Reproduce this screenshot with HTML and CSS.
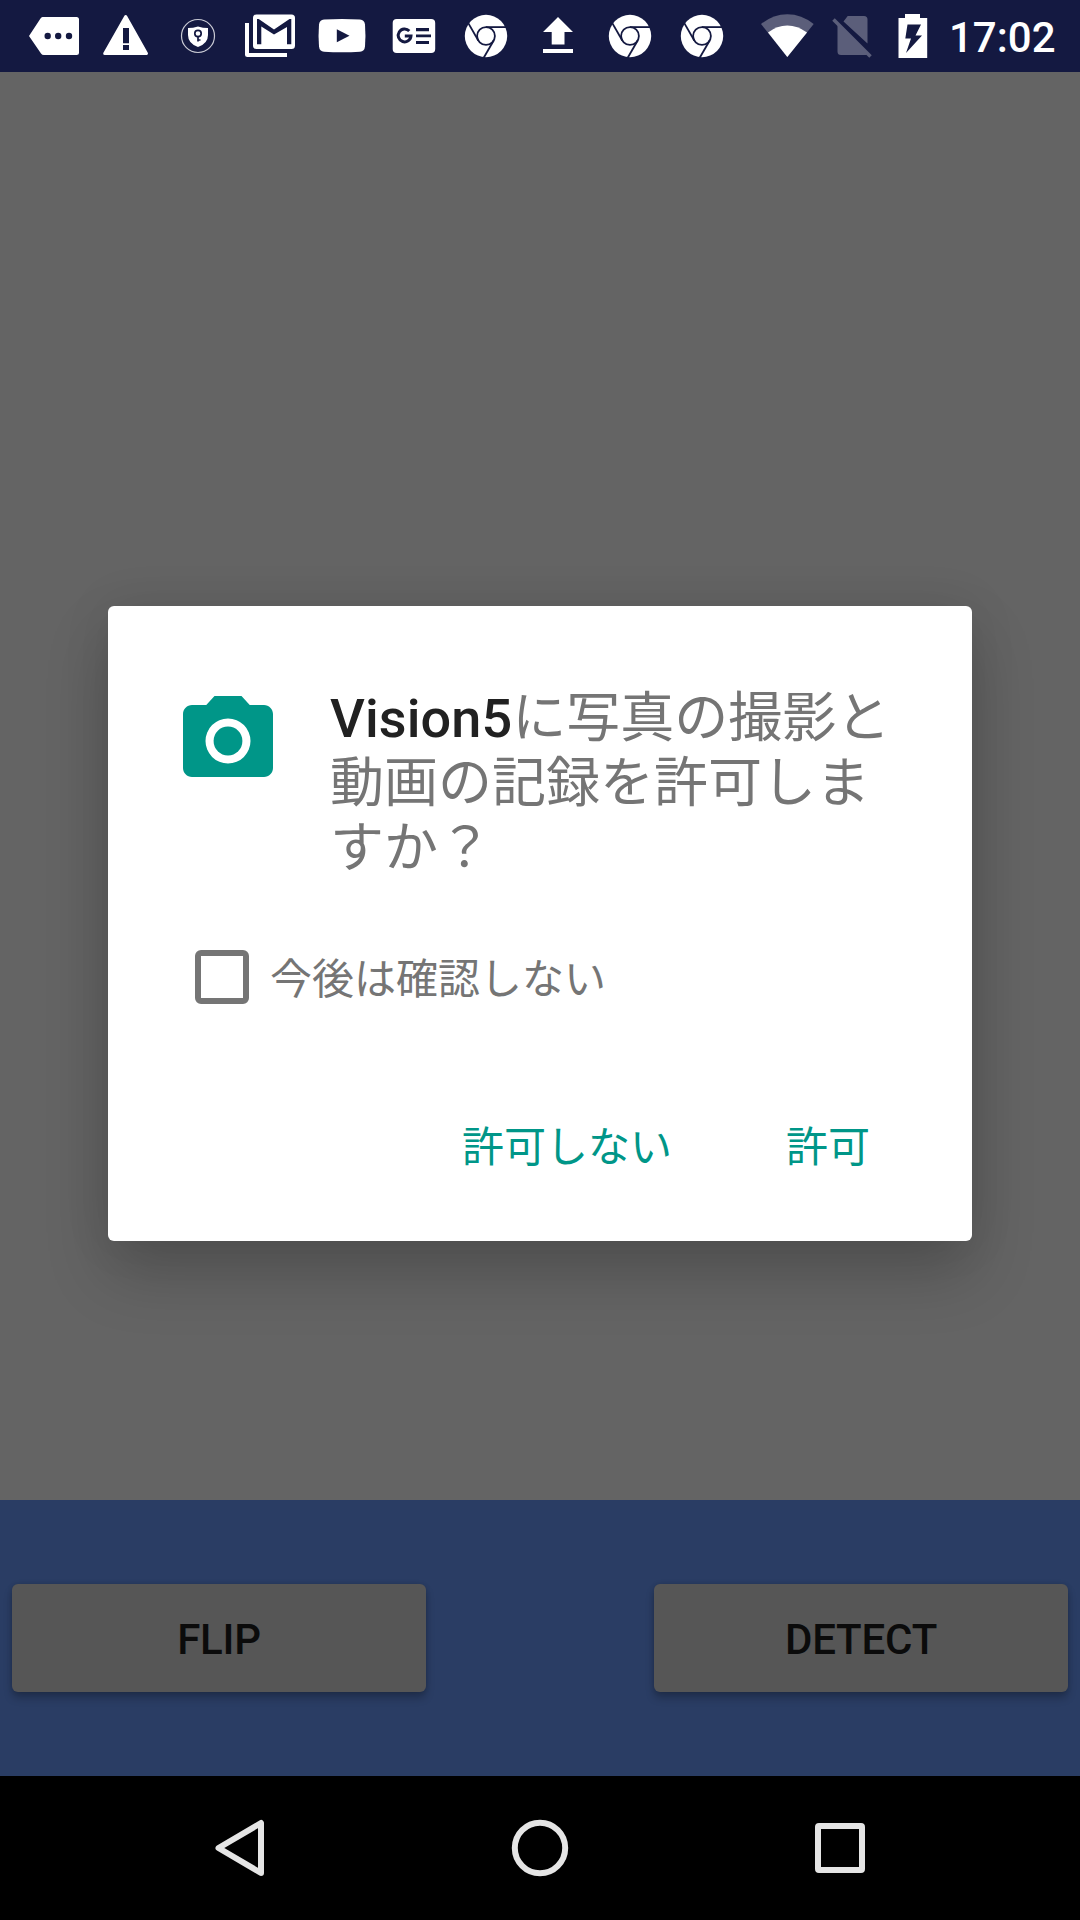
FILE: index.html
```html
<!DOCTYPE html>
<html lang="ja">
<head>
<meta charset="utf-8">
<title>Vision5</title>
<link rel="stylesheet" href="styles.css">
</head>
<body>
<svg class="defs" width="0" height="0" aria-hidden="true">
  <symbol id="chrome" viewBox="0 0 72 72">
    <circle cx="36" cy="36" r="21.2" fill="#fff"/>
    <g fill="none" stroke="#141941" stroke-width="1.8">
      <circle cx="36" cy="36" r="8.9"/>
      <path d="M36 27.1H56"/>
      <path d="M36 27.1H56" transform="rotate(120 36 36)"/>
      <path d="M36 27.1H56" transform="rotate(240 36 36)"/>
    </g>
  </symbol>
</svg>
<div class="screen">
  <header class="status">
    <div class="notifications">
      <svg viewBox="0 0 72 72"><path d="M24.5 17H58.500q2.500 0 2.500 2.500V52.500q0 2.500-2.500 2.500H26q-2 0-3-1.600L11 36 22.500 18.500q.8-1.500 2-1.500z" fill="#fff"/><g fill="#141941"><circle cx="29.700" cy="36" r="3.200"/><circle cx="40.200" cy="36" r="3.200"/><circle cx="51" cy="36" r="3.200"/></g></svg>
      <svg viewBox="0 0 72 72"><path d="M35.700 16.500L56.500 53.500H14.700z" fill="#fff" stroke="#fff" stroke-width="3" stroke-linejoin="round"/><path d="M33 28h6v15.300h-6zM33 45h6v5h-6z" fill="#141941"/></svg>
      <svg viewBox="0 0 72 72"><circle cx="36" cy="36" r="16.500" fill="none" stroke="#c9cad4" stroke-width="1.200"/><path d="M36 26.500q5 1.500 10 1.500v7q0 8.500-10 12-10-3.500-10-12v-7q5 0 10-1.500z" fill="#fff"/><g fill="none" stroke="#141941" stroke-width="1.700"><circle cx="36" cy="33.500" r="3.200"/><path d="M36 36.500v5M36 40h2.500"/></g></svg>
      <svg viewBox="0 0 72 72"><path d="M11 23h4v30h38v4H13.500q-2.500 0-2.500-2.500z" fill="#fff"/><rect x="19" y="14.500" width="42" height="34.500" rx="3.500" fill="#fff"/><path d="M23 44.300V19h1.700L40 29.500 55.500 19H57.300V44.300H53V27L40 34.500 27.300 26.500V44.300z" fill="#141941"/></svg>
      <svg viewBox="0 0 72 72"><path d="M18 19.500q18-1 36 0 4.500.4 5 5 .9 11.500 0 22-.5 4.800-5 5.200-18 1-36 0-4.500-.4-5-5.200-.9-10.500 0-22 .5-4.600 5-5z" fill="#fff"/><path d="M30.800 29.300L43.500 35.700 30.800 42.200z" fill="#141941"/></svg>
      <svg viewBox="0 0 72 72"><rect x="14.700" y="19" width="42.500" height="34" rx="4" fill="#fff"/><path d="M31.300 31.100A6.400 6.400 0 1 0 33 35.900H26.800" fill="none" stroke="#141941" stroke-width="3"/><path d="M38 28h13v3.200H38zM38 34.500h15v2.800H38zM38 41h13v3H38z" fill="#141941"/></svg>
      <svg><use href="#chrome"/></svg>
      <svg viewBox="0 0 72 72"><path d="M36 17L51 32H42.500V44.500H29.700V32H21zM21 49h30v4H21z" fill="#fff"/></svg>
      <svg><use href="#chrome"/></svg>
      <svg><use href="#chrome"/></svg>
    </div>
    <div class="system">
      <svg class="wifi" viewBox="0 0 54 72"><path d="M27.300 57L1 24Q13 14.200 27.300 14.200T53.700 24z" fill="#5b5e7a"/><path d="M27.300 57L8 32.500Q17 25.500 27.300 25.500T47 32.500z" fill="#fff"/></svg>
      <svg class="sim" viewBox="0 0 42 72"><path d="M17.700 16H34q3.500 0 3.500 3.500V43.500L13.500 21.500zM7.500 24.500L37.500 54.500 36 55H11q-3.500 0-3.500-3.500z" fill="#5b5e7a"/><path d="M3.500 19.500L40.500 56.500" stroke="#5b5e7a" stroke-width="3.600"/></svg>
      <svg class="battery" viewBox="0 0 30 72"><path d="M7 14H22v4h7.200V58H.5V18H7z" fill="#fff"/><path d="M9.500 24.500H23L17.500 35.500H24L8 53 13 38.500H7.300z" fill="#141941"/></svg>
      <span class="clock">17:02</span>
    </div>
  </header>

  <main class="preview">
    <section class="dialog">
      <div class="message">
        <svg class="camera" viewBox="0 0 24 24"><path fill-rule="evenodd" d="M9 2L7.170 4H4c-1.100 0-2 .9-2 2v12c0 1.100.9 2 2 2h16c1.100 0 2-.9 2-2V6c0-1.100-.9-2-2-2h-3.170L15 2H9zm3 15a5 5 0 1 1 0-10 5 5 0 0 1 0 10z"/><circle cx="12" cy="12" r="3.200"/></svg>
        <p class="title"><b>Vision5</b>に写真の撮影と<br>動画の記録を許可しま<br>すか？</p>
      </div>
      <label class="remember"><span class="box"></span><span class="label">今後は確認しない</span></label>
      <div class="actions"><span>許可しない</span><span>許可</span></div>
    </section>
  </main>

  <section class="controls">
    <div class="button">FLIP</div>
    <div class="button">DETECT</div>
  </section>

  <nav class="navbar">
    <svg viewBox="0 0 72 72"><path d="M57 11V61L14.500 36z"/></svg>
    <svg viewBox="0 0 72 72"><circle cx="36" cy="36" r="25.200"/></svg>
    <svg viewBox="0 0 72 72"><rect x="14" y="14" width="44" height="44" rx="1"/></svg>
  </nav>
</div>
</body>
</html>
```
FILE: styles.css
```css
* { box-sizing: border-box; }
body { margin: 0; font-family: Roboto, "Noto Sans CJK JP", sans-serif; }
.defs { display: block; }
.screen {
  display: grid;
  grid-template-rows: 72px 1428px 276px 144px;
  width: 1080px;
  height: 1920px;
  overflow: hidden;
  background: #646464;
}
.status {
  display: flex;
  justify-content: space-between;
  padding: 0 23px 0 18px;
  background: #141941;
}
.notifications { display: flex; }
.notifications svg { width: 72px; height: 72px; }
.system { display: flex; align-items: center; }
.wifi { width: 54px; height: 72px; }
.sim { width: 42px; height: 72px; margin-left: 16px; }
.battery { width: 30px; height: 72px; margin-left: 26px; }
.clock {
  width: 108px;
  margin-left: 21px;
  padding-top: 3px;
  color: #fff;
  font-size: 42px;
  font-weight: 500;
  line-height: 72px;
  white-space: nowrap;
}
.preview { padding: 534px 108px 0; }
.dialog {
  display: flex;
  flex-direction: column;
  height: 635px;
  padding: 76px 66px 0;
  border-radius: 6px;
  background: #fff;
  color: #757575;
  box-shadow: 0 32px 64px rgba(0, 0, 0, .2), 0 0 50px rgba(0, 0, 0, .08);
}
.message { display: flex; gap: 48px; height: 268px; }
.camera { flex: none; width: 108px; height: 108px; margin-top: 5px; fill: #009688; }
.title { margin: 0; padding-top: 4px; font-size: 54px; line-height: 65px; white-space: nowrap; }
.title b { color: #212121; font-weight: 500; letter-spacing: .1px; }
.remember {
  display: flex;
  align-items: center;
  gap: 21px;
  height: 54px;
  padding-left: 21px;
  font-size: 42px;
}
.label { padding-bottom: 3px; }
.box { width: 54px; height: 54px; border: 6px solid #757575; border-radius: 6px; }
.actions {
  display: flex;
  justify-content: flex-end;
  gap: 114px;
  margin-top: 113px;
  padding-right: 36px;
  color: #009688;
  font-size: 42px;
  line-height: 62px;
}
.controls {
  display: flex;
  align-items: center;
  justify-content: space-between;
  padding: 0 12px;
  background: #2a3d64;
}
.button {
  width: 414px;
  height: 108px;
  border-radius: 6px;
  background: #565656;
  box-shadow: 0 6px 8px rgba(0, 0, 0, .24), 0 0 5px rgba(0, 0, 0, .12);
  color: #0b0b0b;
  font-size: 42px;
  font-weight: 500;
  letter-spacing: -.2px;
  line-height: 112px;
  text-align: center;
}
.navbar {
  display: flex;
  align-items: center;
  justify-content: center;
  gap: 228px;
  background: #000;
}
.navbar svg {
  width: 72px;
  height: 72px;
  fill: none;
  stroke: #e5e5e5;
  stroke-width: 6px;
  stroke-linejoin: round;
}
```
